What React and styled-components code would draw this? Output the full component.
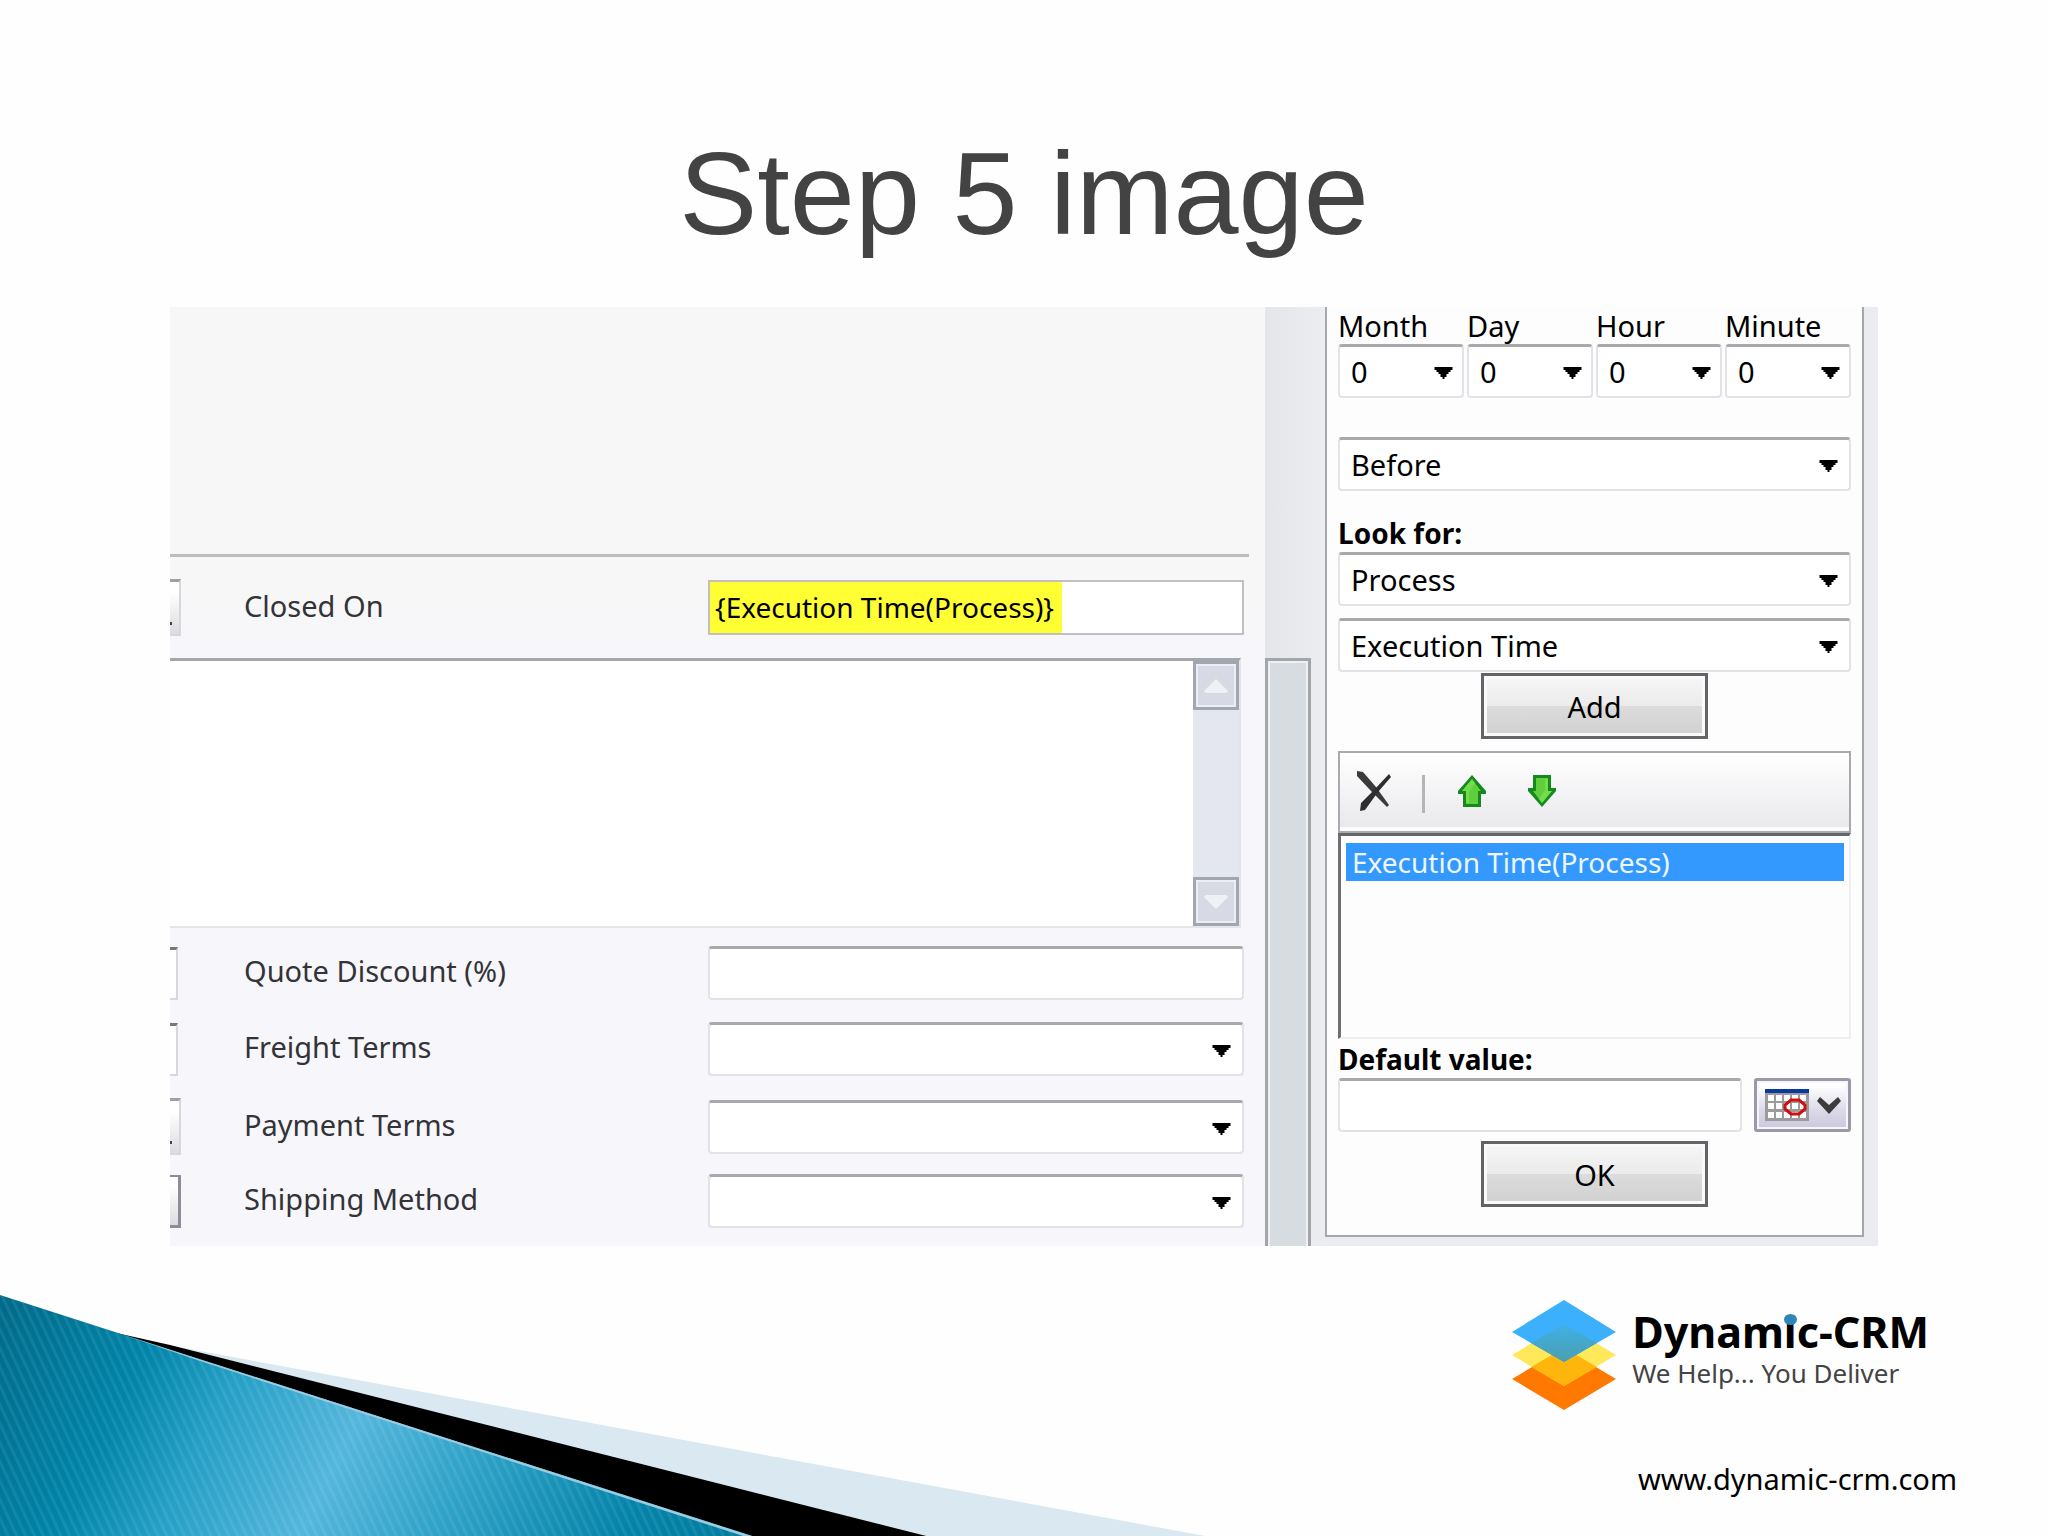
import { useState } from 'react';
import styled, { createGlobalStyle } from 'styled-components';

const GlobalStyle = createGlobalStyle`
  *, *::before, *::after {
    box-sizing: border-box;
  }

  body {
    margin: 0;
    background: #fefefe;
    color: #000;
    font-family: "Noto Sans", "Open Sans", sans-serif;
    font-size: 29px;
  }

  button, input, select, textarea {
    font: inherit;
    color: inherit;
  }
`;

// Small black triangle shown at the right of every drop-down
const DropDown = ({ id, label, options = [], flush }) => (
  <SelectWrap>
    <Select id={id} aria-label={label}>
      {options.map((option) => (
        <option key={option}>{option}</option>
      ))}
    </Select>
    <Arrow viewBox="0 0 18 12" aria-hidden="true" $flush={flush}>
      <path d="M0 0h18v3h-2v2h-2v2h-2v3h-2v2H8v-2H6V7H4V5H2V3H0z" />
    </Arrow>
  </SelectWrap>
);

const DeleteIcon = () => (
  <svg width="36" height="42" viewBox="0 0 36 42" aria-hidden="true">
    <path d="M1 1l6 1 13 15 13 18-2 2-15-15L1 6z" fill="#3a3a3a" />
    <path d="M33 4l2 3-13 15L9 40l-5 1 1-8 13-13z" fill="#2e2e2e" />
  </svg>
);

const MoveIcon = ({ down }) => (
  <svg width="30" height="34" viewBox="0 0 30 34" aria-hidden="true">
    <g transform={down ? 'rotate(180 15 17)' : undefined}>
      <path d="M15 1l14 16v3h-5v13H6V20H1v-3z" fill="#148a1c" />
      <path d="M15 5l9 12h-3v13H9V17H5z" fill="#5fd03c" />
      <path d="M15 5l3 4-6 9v11H9V17H5z" fill="#8be45c" opacity="0.5" />
    </g>
  </svg>
);

const CalendarIcon = () => (
  <svg width="44" height="32" viewBox="0 0 44 32" aria-hidden="true">
    <rect width="44" height="32" fill="#9c9a9a" />
    <rect width="44" height="4" fill="#0a3a9c" />
    {[6, 14, 23].map((y) =>
      [3, 11, 19, 27, 35].map((x) => (
        <rect key={`${x}-${y}`} x={x} y={y} width="6" height="6" fill="#fff" />
      ))
    )}
    <path d="M26 11h8l6 5v4l-6 5h-8l-6-5v-4z" fill="none" stroke="#d01010" strokeWidth="3" />
  </svg>
);

const ChevronIcon = () => (
  <svg width="24" height="17" viewBox="0 0 24 17" aria-hidden="true">
    <path d="M3 0l9 8 9-8 3 4-12 13L0 4z" fill="#3c3c3c" />
  </svg>
);

const LogoMark = () => (
  <svg width="104" height="110" viewBox="0 0 104 110" aria-hidden="true">
    <defs>
      <linearGradient id="blend" x1="0" y1="0" x2="0" y2="1">
        <stop offset="0" stopColor="#40b0e8" />
        <stop offset="1" stopColor="#4a9fae" />
      </linearGradient>
    </defs>
    <path d="M52 48l52 31-52 31L0 79z" fill="#ff7800" />
    <path d="M52 24l52 31-52 31L0 55z" fill="#ffe85a" />
    <path d="M52 48l33 19-33 19-33-19z" fill="#ffb60c" />
    <path d="M52 0l52 32-52 30L0 32z" fill="#3cb0fc" />
    <path d="M52 24l33 19-33 19-33-19z" fill="url(#blend)" />
  </svg>
);

// Ribbon in the lower left corner of the slide
const Wedges = () => (
  <WedgeSvg viewBox="0 0 1208 241" preserveAspectRatio="none" aria-hidden="true">
    <defs>
      <linearGradient id="teal" gradientUnits="userSpaceOnUse" x1="0" y1="0" x2="698" y2="349">
        <stop offset="0" stopColor="#006a8a" />
        <stop offset="0.2" stopColor="#0084a8" />
        <stop offset="0.32" stopColor="#26a0c6" />
        <stop offset="0.48" stopColor="#54b6dc" />
        <stop offset="0.66" stopColor="#2a9fc4" />
        <stop offset="0.85" stopColor="#0483a8" />
        <stop offset="1" stopColor="#007c9e" />
      </linearGradient>
      <pattern id="stripes" width="8" height="8" patternUnits="userSpaceOnUse" patternTransform="rotate(-25)">
        <rect width="3" height="8" fill="#fff" opacity="0.08" />
      </pattern>
    </defs>
    <path d="M162 49L1205 241H900z" fill="#d9e8f1" />
    <path d="M112 37L170 50 926 241H740z" fill="#000" />
    <path d="M0 0L118 38 752 241H0z" fill="url(#teal)" />
    <path d="M0 0L118 38 752 241H0z" fill="url(#stripes)" />
    <path d="M118 38L752 241h-9L200 66z" fill="#9acce2" />
  </WedgeSvg>
);

const ORDER_FIELDS = [
  { id: 'discount', label: 'Quote Discount (%)', stub: 'field' },
  { id: 'freight', label: 'Freight Terms', stub: 'field', select: true },
  { id: 'payment', label: 'Payment Terms', stub: 'lookup', select: true },
  { id: 'shipping', label: 'Shipping Method', stub: 'button', select: true },
];

const OFFSETS = ['Month', 'Day', 'Hour', 'Minute'];

const App = () => {
  const [closedOn, setClosedOn] = useState('{Execution Time(Process)}');
  const [notes, setNotes] = useState('');

  return (
    <Slide>
      <GlobalStyle />
      <Title>Step 5 image</Title>

      <Screen>
        <Form>
          <FormHeader />
          <ClosedRow>
            <Stub $kind="lookup" />
            <Label htmlFor="closed">Closed On</Label>
            <ClosedField>
              <ClosedInput
                id="closed"
                value={closedOn}
                onChange={(e) => setClosedOn(e.target.value)}
              />
            </ClosedField>
          </ClosedRow>

          <NotesBox>
            <Notes aria-label="Description" value={notes} onChange={(e) => setNotes(e.target.value)} />
            <NotesScroll>
              <ScrollButton aria-label="Scroll up">
                <svg width="24" height="14" viewBox="0 0 24 14"><path d="M12 0l12 12-2 2H2l-2-2z" fill="#eef1f6" /></svg>
              </ScrollButton>
              <ScrollButton aria-label="Scroll down">
                <svg width="24" height="14" viewBox="0 0 24 14"><path d="M12 14L0 2l2-2h20l2 2z" fill="#eef1f6" /></svg>
              </ScrollButton>
            </NotesScroll>
          </NotesBox>

          <FieldRows>
            {ORDER_FIELDS.map(({ id, label, stub, select }) => (
              <FieldRow key={id}>
                <Stub $kind={stub} />
                <Label htmlFor={id}>{label}</Label>
                {select ? <DropDown id={id} /> : <TextInput id={id} />}
              </FieldRow>
            ))}
          </FieldRows>
        </Form>

        <Gutter>
          <Track />
        </Gutter>

        <SideArea>
          <SidePanel>
            <Offsets>
              {OFFSETS.map((name) => (
                <div key={name}>
                  <SideLabel htmlFor={name}>{name}</SideLabel>
                  <DropDown id={name} options={['0']} flush />
                </div>
              ))}
            </Offsets>

            <Group $top={39}>
              <DropDown label="When" options={['Before']} />
            </Group>

            <Group $top={24}>
              <SideLabel htmlFor="entity" $bold>Look for:</SideLabel>
              <DropDown id="entity" options={['Process']} />
            </Group>
            <Group $top={12}>
              <DropDown label="Attribute" options={['Execution Time']} />
            </Group>

            <ActionButton $top={1}>Add</ActionButton>

            <Toolbar>
              <IconButton aria-label="Delete"><DeleteIcon /></IconButton>
              <Separator />
              <IconButton aria-label="Move up"><MoveIcon /></IconButton>
              <IconButton aria-label="Move down"><MoveIcon down /></IconButton>
            </Toolbar>
            <List role="listbox" aria-label="Values">
              <ListItem role="option" aria-selected="true">Execution Time(Process)</ListItem>
            </List>

            <Group $top={2}>
              <SideLabel htmlFor="default" $bold>Default value:</SideLabel>
              <DefaultRow>
                <TextInput id="default" />
                <CalendarButton aria-label="Pick a date">
                  <CalendarIcon />
                  <ChevronIcon />
                </CalendarButton>
              </DefaultRow>
            </Group>

            <ActionButton $top={9}>OK</ActionButton>
          </SidePanel>
        </SideArea>
      </Screen>

      <Footer>
        <Wedges />
        <Brand>
          <Logo>
            <LogoMark />
            <div>
              <BrandName>Dynam<DottedI>i</DottedI>c-CRM</BrandName>
              <Tagline>We Help... You Deliver</Tagline>
            </div>
          </Logo>
          <SiteLink href="#site">www.dynamic-crm.com</SiteLink>
        </Brand>
      </Footer>
    </Slide>
  );
};

// Styled components
const Slide = styled.main`
  min-height: 100vh;
  display: flex;
  flex-direction: column;
`;

const Title = styled.h1`
  margin: 124px 0 43px;
  font-family: "Liberation Sans", Arial, sans-serif;
  font-size: 117px;
  line-height: 140px;
  font-weight: 400;
  text-align: center;
  color: #434343;
`;

const Screen = styled.section`
  margin: 0 170px;
  display: grid;
  grid-template-columns: 1fr 60px 553px;
`;

const Form = styled.form`
  display: flex;
  flex-direction: column;
  background: linear-gradient(#f7f7f7 0, #f7f7f7 270px, #f7f7fb 340px);
`;

const FormHeader = styled.div`
  height: 250px;
  margin-right: 16px;
  border-bottom: 3px solid #bcbdbc;
`;

const FieldRow = styled.div`
  display: grid;
  grid-template-columns: 74px 1fr 536px;
  align-items: center;
  margin-right: 21px;
`;

const ClosedRow = styled(FieldRow)`
  height: 101px;
`;

const Label = styled.label`
  padding-bottom: 4px;
  color: #333338;
  line-height: 40px;
`;

// Right edges of the controls that run in from the previous column
const Stub = styled.span`
  height: ${({ $kind }) => ($kind === 'lookup' ? 57 : 53)}px;
  width: ${({ $kind }) => ($kind === 'field' ? 8 : 11)}px;
  border: solid #d8d8dc;
  border-width: 3px 2px 2px 0;
  border-top-color: ${({ $kind }) => ($kind === 'field' ? '#77777b' : '#a0a0a4')};
  background: ${({ $kind }) => ($kind === 'field' ? '#fff' : 'linear-gradient(#fff 20%, #dcdce0)')};
  ${({ $kind }) => $kind === 'button' && 'border-width: 2px 3px 3px 0; border-color: #8e8c9c;'}

  &::after {
    content: '';
    display: ${({ $kind }) => ($kind === 'lookup' ? 'block' : 'none')};
    width: 2px;
    height: 3px;
    margin-top: 40px;
    background: #444;
  }
`;

const TextInput = styled.input`
  width: 100%;
  min-width: 0;
  height: 54px;
  padding: 0 10px;
  background: #fff;
  border: 2px solid #e2e3e7;
  border-top: 3px solid #a8a9ad;
  border-radius: 4px;
  outline: none;
`;

const ClosedField = styled.div`
  display: flex;
  height: 55px;
  background: #fff;
  border: 2px solid #c0c0c0;
`;

const ClosedInput = styled.input`
  width: 352px;
  padding: 0 5px 2px;
  border: 0;
  outline: none;
  font-size: 28px;
  background: #ffff33;
`;

const SelectWrap = styled.div`
  position: relative;
`;

const Select = styled.select`
  appearance: none;
  display: block;
  width: 100%;
  height: 54px;
  padding: 0 11px;
  background: #fff;
  border: 2px solid #e2e3e7;
  border-top: 3px solid #a8a9ad;
  border-radius: 4px;
  outline: none;
`;

const Arrow = styled.svg`
  position: absolute;
  top: 23px;
  right: ${({ $flush }) => ($flush ? 11 : 13)}px;
  width: 19px;
  height: 12px;
  pointer-events: none;
`;

const NotesBox = styled.div`
  display: flex;
  height: 270px;
  margin-right: 24px;
  border: solid #e4e5e9;
  border-width: 3px 2px 2px 0;
  border-top-color: #a4a6aa;
  background: #fff;
`;

const Notes = styled.textarea`
  flex: 1;
  padding: 8px 12px;
  border: 0;
  outline: none;
  resize: none;
  background: transparent;
`;

const NotesScroll = styled.div`
  width: 46px;
  display: flex;
  flex-direction: column;
  justify-content: space-between;
  background: #e4e7ef;
`;

const ScrollButton = styled.button.attrs({ type: 'button' })`
  height: 49px;
  padding: 0;
  display: flex;
  align-items: center;
  justify-content: center;
  background: #d7dae4;
  border: 3px solid #a2a6b0;
  box-shadow: inset 0 0 0 2px #eceef6;
`;

const FieldRows = styled.div`
  display: flex;
  flex-direction: column;
  gap: 22px;
  padding: 18px 0;

  ${FieldRow} {
    height: 54px;
  }
`;

const Gutter = styled.div`
  padding-top: 351px;
  display: flex;
  background: linear-gradient(90deg, #e4e6ea, #ecedf0);
`;

const Track = styled.div`
  width: 46px;
  background: #d6dcdf;
  border: 3px solid #a2a6a9;
  border-bottom: 0;
  box-shadow: inset 2px 2px 0 #eef0f2, inset -2px 0 0 #eef0f2;
`;

const SideArea = styled.div`
  padding: 0 14px 9px 0;
  background: #ebecf0;
`;

const SidePanel = styled.div`
  padding: 0 11px 28px;
  display: flex;
  flex-direction: column;
  background: #fdfdfd;
  border: 2px solid #a6a7ab;
  border-top: 0;
`;

const Offsets = styled.div`
  display: grid;
  grid-template-columns: repeat(4, 1fr);
  column-gap: 3px;
`;

const SideLabel = styled.label`
  display: block;
  line-height: 37px;
  ${({ $bold }) => $bold && 'font-size: 28px; font-weight: 700;'}
`;

const Group = styled.div`
  margin-top: ${({ $top }) => $top}px;
`;

const ActionButton = styled.button.attrs({ type: 'button' })`
  align-self: center;
  width: 227px;
  height: 66px;
  margin-top: ${({ $top }) => $top}px;
  padding: 0;
  border: 3px solid #646468;
  background: linear-gradient(#f6f6f7, #ebebec 50%, #dcdcdd 50%, #d0d0d1);
  box-shadow: inset 0 0 0 3px #fafafa;
`;

const Toolbar = styled.div`
  display: flex;
  align-items: center;
  height: 82px;
  margin-top: 12px;
  padding: 0 16px 2px;
  border: 2px solid #a9aaae;
  background: linear-gradient(#fff, #e8e8ec);
  box-shadow: inset 0 -4px 0 #fbfbfc;
`;

const IconButton = styled.button.attrs({ type: 'button' })`
  display: flex;
  padding: 0;
  border: 0;
  background: none;

  & + & {
    margin-left: 40px;
  }
`;

const Separator = styled.span`
  width: 3px;
  height: 38px;
  margin: 6px 32px 0 30px;
  background: #b4b5b8;
`;

const List = styled.ul`
  height: 206px;
  margin: 0;
  padding: 7px 5px;
  list-style: none;
  border: 2px solid #eeeff1;
  border-top: 3px solid #646569;
  border-left: 3px solid #6e6f73;
`;

const ListItem = styled.li`
  height: 38px;
  padding-left: 6px;
  font-size: 28px;
  line-height: 38px;
  color: #eef6ff;
  background: #3399ff;
`;

const DefaultRow = styled.div`
  display: grid;
  grid-template-columns: 1fr 97px;
  gap: 12px;
`;

const CalendarButton = styled.button.attrs({ type: 'button' })`
  display: flex;
  align-items: center;
  justify-content: center;
  gap: 8px;
  padding: 0;
  border: 3px solid #9a9aa6;
  border-radius: 3px;
  background: linear-gradient(#fff 10%, #dcdae8 60%, #cac8dc);
  box-shadow: inset 0 0 0 2px #f6f6fa;
`;

const Footer = styled.footer`
  margin-top: auto;
  display: flex;
  align-items: flex-end;
  justify-content: space-between;
`;

const WedgeSvg = styled.svg`
  display: block;
  width: 59%;
  height: 241px;
`;

const Brand = styled.div`
  margin-right: 91px;
  display: flex;
  flex-direction: column;
  align-items: flex-end;
`;

const Logo = styled.div`
  display: flex;
  gap: 16px;
  align-items: flex-start;
  margin: 0 28px 49px 0;
`;

const BrandName = styled.div`
  margin-top: 7px;
  font-size: 43px;
  line-height: 50px;
  font-weight: 700;
`;

const DottedI = styled.span`
  position: relative;

  &::before {
    content: '';
    position: absolute;
    top: 12px;
    left: 0;
    width: 13px;
    height: 11px;
    border-radius: 50%;
    background: #2e86b8;
  }
`;

const Tagline = styled.div`
  font-size: 26px;
  line-height: 32px;
  color: #444;
`;

const SiteLink = styled.a`
  margin-bottom: 37px;
  line-height: 40px;
  color: #000;
  text-decoration: none;
`;

export default App;
